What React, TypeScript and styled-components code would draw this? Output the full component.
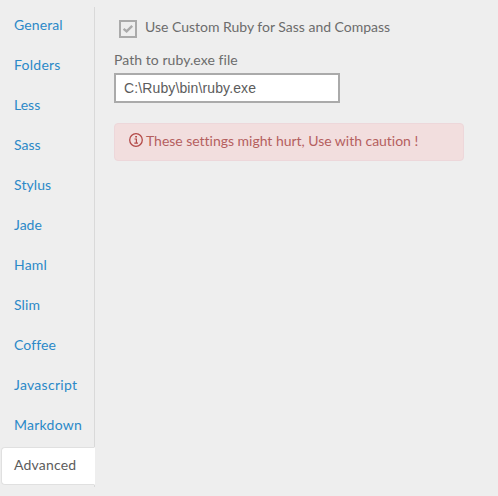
import React from "react";
import styled, { createGlobalStyle } from "styled-components";

const GlobalStyle = createGlobalStyle`
  * { box-sizing: border-box; }
  body { margin: 0; background: #eeeeee; }
`;

const Page = styled.div`
  display: flex;
  width: 498px;
  height: 496px;
  background: #eeeeee;
  font: 14px/20px Lato, "Liberation Sans", sans-serif;
  font-variant-ligatures: none;
  color: #6c6c6c;
  overflow: hidden;
`;

const Tabs = styled.nav`
  display: flex;
  flex-direction: column;
  gap: 2px;
  width: 94px;
  height: 480px;
  margin: 7px 0 0 1px;
  border-right: 1px solid #d9d9d9;
`;

const Tab = styled.a<{ $active?: boolean; $tracking: number }>`
  height: 38px;
  padding: 7px 0 9px 12px;
  margin-right: -1px;
  border: 1px solid ${(p) => (p.$active ? "#e0e0e0" : "transparent")};
  border-right-color: ${(p) => (p.$active ? "#ffffff" : "transparent")};
  border-radius: 4px 0 0 4px;
  background: ${(p) => (p.$active ? "#ffffff" : "transparent")};
  color: ${(p) => (p.$active ? "#5c5c5c" : "#2b89c8")};
  letter-spacing: ${(p) => p.$tracking}px;
  white-space: nowrap;
`;

const Panel = styled.main`
  display: flex;
  flex-direction: column;
  align-items: flex-start;
  width: 350px;
  margin-left: 19px;
  padding-top: 17px;
`;

const CheckRow = styled.label`
  display: flex;
  height: 33px;
  padding-left: 5px;
  gap: 8px;
  letter-spacing: -0.01px;
`;

const CheckBox = styled.span`
  display: flex;
  width: 18px;
  height: 18px;
  margin-top: 3px;
  border: 2px solid #aaaaaa;
`;

const FieldLabel = styled.label`
  height: 23px;
  letter-spacing: 0.06px;
`;

const PathInput = styled.input`
  width: 226px;
  height: 30px;
  padding: 0 8px;
  border: 2px solid #aaaaaa;
  border-radius: 0;
  background: #ffffff;
  color: #5c5c5c;
  font: 14px "Liberation Sans", Arial, sans-serif;
  letter-spacing: 0.12px;
  outline: none;
`;

const Alert = styled.div`
  display: flex;
  align-items: flex-start;
  gap: 3px;
  width: 350px;
  height: 38px;
  margin-top: 20px;
  padding: 7px 14px;
  border: 1px solid #edd7da;
  border-radius: 4px;
  background: #f2dede;
  color: #b5605e;
  letter-spacing: -0.025px;
  white-space: nowrap;
`;

const InfoIcon = styled.svg`
  flex: none;
  width: 14px;
  height: 14px;
  margin-top: 2px;
`;

const tabs: { name: string; tracking: number }[] = [
  { name: "General", tracking: 0.1 },
  { name: "Folders", tracking: 0.25 },
  { name: "Less", tracking: 0 },
  { name: "Sass", tracking: 0 },
  { name: "Stylus", tracking: 0.1 },
  { name: "Jade", tracking: 0 },
  { name: "Haml", tracking: 0.2 },
  { name: "Slim", tracking: 0.1 },
  { name: "Coffee", tracking: 0.1 },
  { name: "Javascript", tracking: 0.28 },
  { name: "Markdown", tracking: 0.24 },
  { name: "Advanced", tracking: 0.18 },
];

export default function App() {
  return (
    <>
      <GlobalStyle />
      <Page>
        <Tabs>
          {tabs.map(({ name, tracking }) => (
            <Tab key={name} $active={name === "Advanced"} $tracking={tracking}>{name}</Tab>
          ))}
        </Tabs>
        <Panel>
          <CheckRow>
            <CheckBox>
              <svg width="14" height="14" viewBox="0 0 14 14" fill="none" stroke="#aaaaaa" strokeWidth="2.4">
                <path d="M2.6 6.8 5.6 9.4 11.2 3.8" />
              </svg>
            </CheckBox>
            <span>Use Custom Ruby for Sass and Compass</span>
          </CheckRow>
          <FieldLabel htmlFor="ruby-path">Path to ruby.exe file</FieldLabel>
          <PathInput id="ruby-path" defaultValue="C:\Ruby\bin\ruby.exe" spellCheck={false} />
          <Alert>
            <InfoIcon viewBox="0 0 14 14" fill="none" stroke="#b34a48">
              <circle cx="7" cy="7" r="6.3" strokeWidth="1.3" />
              <path d="M5.5 6H7.4V10M5.3 10.1H9" strokeWidth="1.2" />
              <path d="M6.2 3.8H8" strokeWidth="1.6" />
            </InfoIcon>
            <span>These settings might hurt, Use with caution !</span>
          </Alert>
        </Panel>
      </Page>
    </>
  );
}
